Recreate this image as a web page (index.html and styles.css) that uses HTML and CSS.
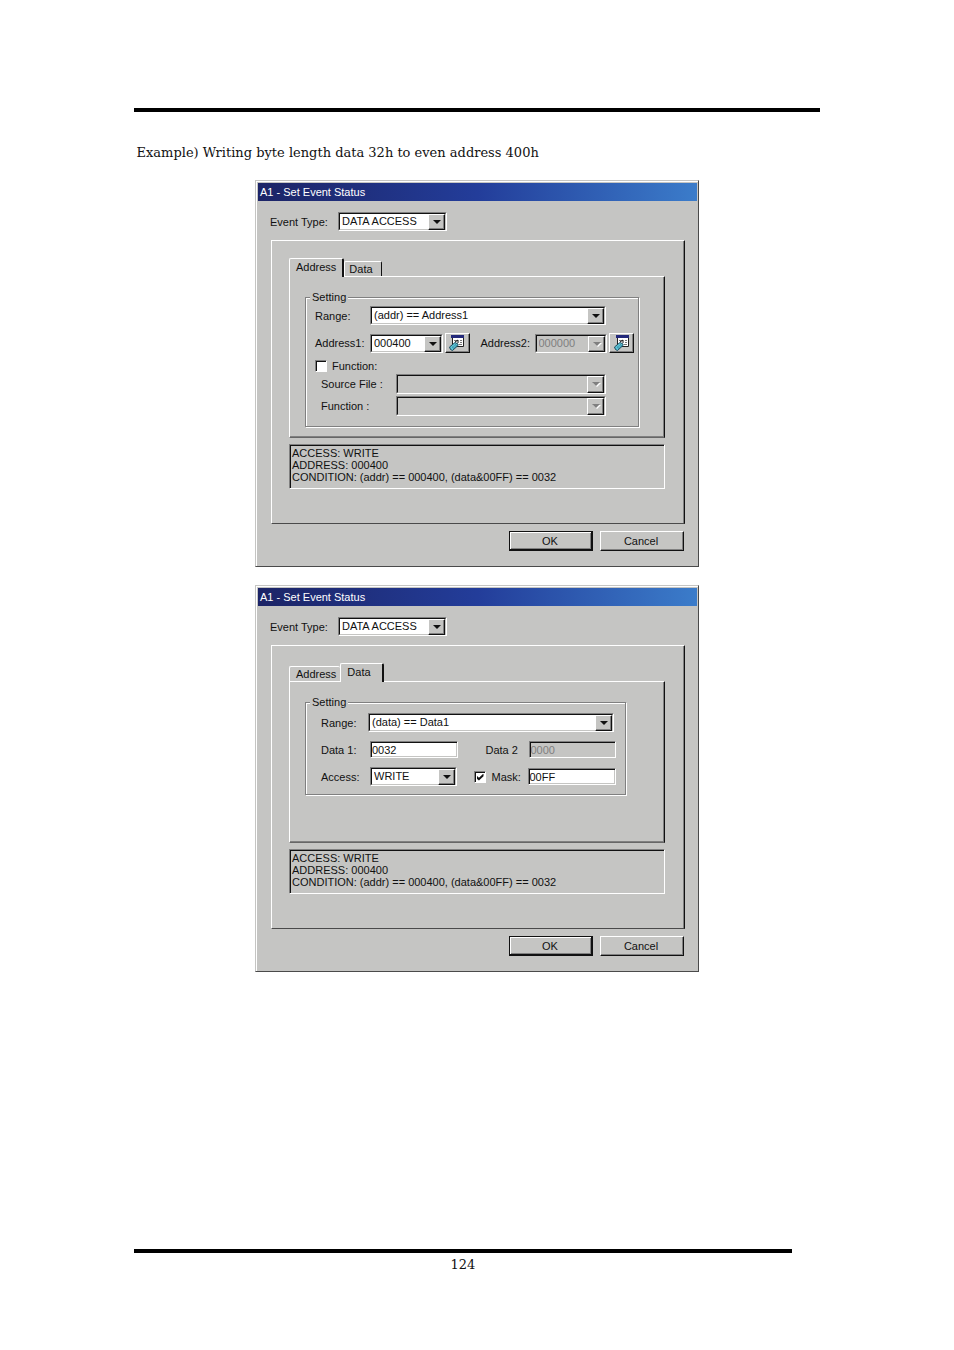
FILE: index.html
```
<!DOCTYPE html>
<html lang="en">
<head>
    <meta charset="utf-8">
    <meta name="viewport" content="width=device-width, initial-scale=1">
    <title>Set Event Status</title>
    <link rel="stylesheet" href="styles.css">
</head>
<body>
    <main class="content">
        <p class="example">Example) Writing byte length data 32h to even address 400h</p>

        <!-- Address tab -->
        <form class="dialog">
            <h2 class="title-bar">A1 - Set Event Status</h2>
            <div class="type-row">
                <label for="type-1">Event Type:</label>
                <span class="combo"><select id="type-1"><option>DATA ACCESS</option></select></span>
            </div>

            <div class="panel">
                <div class="tabs" role="tablist">
                    <button type="button" class="tab active" role="tab" aria-selected="true">Address</button>
                    <button type="button" class="tab" role="tab" aria-selected="false">Data</button>
                </div>
                <div class="tab-panel" role="tabpanel">
                    <fieldset class="setting">
                        <legend>Setting</legend>
                        <div class="row range">
                            <label for="range-1">Range:</label>
                            <span class="combo"><select id="range-1"><option>(addr) == Address1</option></select></span>
                        </div>
                        <div class="row addresses">
                            <label for="address1">Address1:</label>
                            <span class="combo"><select id="address1"><option>000400</option></select></span>
                            <button type="button" class="browse" aria-label="Browse Address1">
                                <svg width="16" height="16" viewBox="0 0 16 16">
                                    <path fill="#fff" stroke="#222" d="M3.5 1.5h11v10h-11z"/>
                                    <path fill="#23297a" d="M2 0h13v3H2z"/>
                                    <path stroke="#777" d="M5 5.500h3M11 5.500h2M11 7.500h2M10 9.500h3"/>
                                    <path fill="none" stroke="#111" d="M6 7l3-2v3"/>
                                    <path fill="#5cc4d6" stroke="#1d4a5c" d="M.5 12L6 7.500l3 1.500v1.500L3.500 15.500l-2-1z"/>
                                    <path stroke="#28728c" stroke-dasharray="1 1" d="M3 12.500l4-3M4 13.500l4-3"/>
                                </svg>
                            </button>
                            <label for="address2" class="second">Address2:</label>
                            <span class="combo"><select id="address2" disabled><option>000000</option></select></span>
                            <button type="button" class="browse" aria-label="Browse Address2">
                                <svg width="16" height="16" viewBox="0 0 16 16">
                                    <path fill="#fff" stroke="#222" d="M3.5 1.5h11v10h-11z"/>
                                    <path fill="#23297a" d="M2 0h13v3H2z"/>
                                    <path stroke="#777" d="M5 5.500h3M11 5.500h2M11 7.500h2M10 9.500h3"/>
                                    <path fill="none" stroke="#111" d="M6 7l3-2v3"/>
                                    <path fill="#5cc4d6" stroke="#1d4a5c" d="M.5 12L6 7.500l3 1.500v1.500L3.500 15.500l-2-1z"/>
                                    <path stroke="#28728c" stroke-dasharray="1 1" d="M3 12.500l4-3M4 13.500l4-3"/>
                                </svg>
                            </button>
                        </div>
                        <div class="row check">
                            <input type="checkbox" id="use-function">
                            <label for="use-function">Function:</label>
                        </div>
                        <div class="row source">
                            <label for="source-file">Source File :</label>
                            <span class="combo"><select id="source-file" disabled></select></span>
                        </div>
                        <div class="row source">
                            <label for="function-name">Function :</label>
                            <span class="combo"><select id="function-name" disabled></select></span>
                        </div>
                    </fieldset>
                </div>
                <div class="summary">
                    <div>ACCESS: WRITE</div>
                    <div>ADDRESS: 000400</div>
                    <div>CONDITION: (addr) == 000400, (data&amp;00FF) == 0032</div>
                </div>
            </div>

            <div class="actions">
                <button type="button" class="btn default">OK</button>
                <button type="button" class="btn">Cancel</button>
            </div>
        </form>

        <!-- Data tab -->
        <form class="dialog">
            <h2 class="title-bar">A1 - Set Event Status</h2>
            <div class="type-row">
                <label for="type-2">Event Type:</label>
                <span class="combo"><select id="type-2"><option>DATA ACCESS</option></select></span>
            </div>

            <div class="panel">
                <div class="tabs" role="tablist">
                    <button type="button" class="tab" role="tab" aria-selected="false">Address</button>
                    <button type="button" class="tab active" role="tab" aria-selected="true">Data</button>
                </div>
                <div class="tab-panel" role="tabpanel">
                    <fieldset class="setting data-setting">
                        <legend>Setting</legend>
                        <div class="row range">
                            <label for="range-2">Range:</label>
                            <span class="combo"><select id="range-2"><option>(data) == Data1</option></select></span>
                        </div>
                        <div class="row values">
                            <label for="data1">Data 1:</label>
                            <input type="text" id="data1" value="0032">
                            <label for="data2" class="second">Data 2</label>
                            <input type="text" id="data2" value="0000" disabled>
                        </div>
                        <div class="row values">
                            <label for="access">Access:</label>
                            <span class="combo"><select id="access"><option>WRITE</option></select></span>
                            <span class="second mask">
                                <input type="checkbox" id="use-mask" checked>
                                <label for="use-mask">Mask:</label>
                            </span>
                            <input type="text" value="00FF" aria-label="Mask value">
                        </div>
                    </fieldset>
                </div>
                <div class="summary">
                    <div>ACCESS: WRITE</div>
                    <div>ADDRESS: 000400</div>
                    <div>CONDITION: (addr) == 000400, (data&amp;00FF) == 0032</div>
                </div>
            </div>

            <div class="actions">
                <button type="button" class="btn default">OK</button>
                <button type="button" class="btn">Cancel</button>
            </div>
        </form>
    </main>

    <footer class="page-footer">124</footer>
</body>
</html>
```
FILE: styles.css
```
* {
    box-sizing: border-box;
}

body {
    display: flex;
    flex-direction: column;
    min-height: 100vh;
    margin: 0;
    padding: 108px 14% 76px;
    background: #fff;
    color: #111;
    font-family: "DejaVu Serif", "Century Schoolbook", serif;
}

.content {
    border-top: 4px solid #000;
}

.example {
    margin: 31px 3px 17px;
    font-size: 13px;
    line-height: 20px;
}

.page-footer {
    margin-top: auto;
    margin-right: 28px;
    border-top: 4px solid #000;
    padding-top: 2px;
    font-size: 13px;
    line-height: 19px;
    text-align: center;
}

/* Dialog */
.dialog {
    max-width: 444px;
    margin: 0 auto 18px;
    padding: 2px 1px 15px 2px;
    border: 1px solid;
    border-color: #c5c5c3 #4a4a4a #4a4a4a #c5c5c3;
    box-shadow: inset 1px 1px #fff;
    background: #c5c5c3;
    font-family: "Liberation Sans", Arial, sans-serif;
    font-size: 11px;
    line-height: 12px;
}

.title-bar {
    margin: 0;
    padding: 0 2px;
    background: linear-gradient(to right, #1c2466, #233d9a 50%, #3b7cca);
    color: #fff;
    font-size: 11px;
    font-weight: normal;
    line-height: 18px;
}

.type-row {
    display: flex;
    align-items: center;
    margin: 11px 12px 9px;
}

.type-row label {
    width: 68px;
}

.type-row .combo {
    flex: 0 1 109px;
}

.panel {
    margin: 0 12px 0 13px;
    padding: 17px 19px 34px 17px;
    border: 1px solid;
    border-color: #fff #111 #4a4a4a #fff;
    box-shadow: inset -1px 0 #808080;
}

/* Tabs */
.tabs {
    display: flex;
    align-items: flex-end;
    height: 18px;
}

.tab {
    height: 15px;
    padding: 0 8px 0 4px;
    border: 1px solid;
    border-color: #fff #111 transparent #fff;
    border-bottom: 0;
    border-radius: 2px 2px 0 0;
    background: #c5c5c3;
    color: #111;
    font: inherit;
}

.tab.active {
    position: relative;
    height: 19px;
    margin-bottom: -1px;
    padding: 0 6px 3px;
    border-right-width: 2px;
}

.tab.active:last-child {
    padding: 0 11px 3px 6px;
}

.tab:first-child:not(.active) {
    padding: 0 4px 0 6px;
    border-right: 0;
}

.tab-panel {
    min-height: 162px;
    padding: 14px 25px 8px 15px;
    border: 1px solid;
    border-color: #fff #111 #666 #fff;
    box-shadow: inset -1px -1px #808080;
}

/* Fields */
.setting {
    min-width: 0;
    margin: 0;
    padding: 3px 4px 8px;
    border: 1px solid #808080;
    box-shadow: 1px 1px #fff, inset 1px 1px #fff;
}

.setting legend {
    padding: 0 2px;
    background: #c5c5c3;
}

.row {
    display: flex;
    align-items: center;
    padding-left: 5px;
}

.row label {
    flex: none;
    width: 55px;
    white-space: nowrap;
}

.row .combo,
.row input[type="text"] {
    flex: 1;
}

.range {
    padding-right: 28px;
}

.addresses {
    margin-top: 8px;
}

.addresses .second {
    width: 54px;
    margin-left: 11px;
}

.check {
    gap: 5px;
    margin-top: 7px;
    margin-bottom: 2px;
}

.source {
    margin-bottom: 2px;
}

.setting .source {
    padding: 0 28px 0 11px;
}

.source label {
    width: 75px;
}

.source .combo {
    height: 20px;
}

.data-setting {
    margin-right: 13px;
    padding-top: 5px;
}

.data-setting .row {
    padding-left: 11px;
}

.data-setting .range {
    padding-right: 7px;
}

.data-setting label {
    width: 49px;
}

.data-setting .range label {
    width: 47px;
}

.values {
    margin-top: 9px;
    padding-right: 5px;
}

.values .second {
    width: 43px;
    margin-left: 28px;
}

.values .mask {
    display: flex;
    align-items: center;
    gap: 6px;
    width: 54px;
    margin-left: 17px;
}

.values .mask label {
    width: auto;
}

.combo {
    position: relative;
    min-width: 0;
    height: 19px;
    border: 1px solid;
    border-color: #808080 #fff #fff #808080;
}

.combo select {
    display: block;
    appearance: none;
    width: 100%;
    height: 100%;
    padding: 0 17px 1px 2px;
    border: 1px solid;
    border-color: #111 #c5c5c3 #c5c5c3 #111;
    border-radius: 0;
    background: #fff;
    color: #111;
    font: inherit;
}

.combo select:disabled {
    background: #c5c5c3;
    color: #808080;
    opacity: 1;
}

/* drop-down button drawn over the right end of the select */
.combo::before {
    content: "";
    position: absolute;
    top: 1px;
    right: 1px;
    bottom: 0;
    width: 15px;
    border: 1px solid;
    border-color: #fff #111 #111 #fff;
    box-shadow: inset -1px -1px #808080;
    background: #c5c5c3;
    pointer-events: none;
}

.combo::after {
    content: "";
    position: absolute;
    top: 7px;
    right: 5px;
    border: 4px solid transparent;
    border-top-color: #111;
    border-bottom: 0;
    pointer-events: none;
}

.combo:has(select:disabled)::after {
    border-top-color: #808080;
    filter: drop-shadow(1px 1px 0 #fff);
}

input[type="text"] {
    min-width: 0;
    height: 17px;
    padding: 0 1px;
    border: 1px solid;
    border-color: #808080 #fff #fff #808080;
    border-radius: 0;
    box-shadow: inset 1px 1px #111, inset -1px -1px #c5c5c3;
    background: #fff;
    color: #111;
    font: inherit;
}

input[type="text"]:disabled {
    background: #c5c5c3;
    color: #808080;
}

input[type="checkbox"] {
    flex: none;
    appearance: none;
    width: 12px;
    height: 12px;
    margin: 0;
    border: 1px solid;
    border-color: #808080 #fff #fff #808080;
    box-shadow: inset 1px 1px #111;
    background: #fff;
}

input[type="checkbox"]:checked::before {
    content: "";
    display: block;
    width: 7px;
    height: 7px;
    margin: 2px;
    background: #111;
    clip-path: polygon(0 30%, 35% 60%, 100% 0, 100% 40%, 35% 100%, 0 70%);
}

.browse {
    display: flex;
    align-items: center;
    justify-content: center;
    flex: none;
    width: 25px;
    height: 20px;
    margin-left: 2px;
    padding: 0;
    border: 1px solid;
    border-color: #fff #111 #111 #fff;
    box-shadow: inset -1px -1px #808080;
    background: #c5c5c3;
}

.summary {
    height: 45px;
    margin-top: 6px;
    padding: 2px;
    border: 1px solid;
    border-color: #808080 #fff #fff #808080;
    box-shadow: inset 1px 1px #111;
}

.actions {
    display: flex;
    justify-content: flex-end;
    gap: 7px;
    margin: 7px 13px 0;
}

.btn {
    width: 84px;
    height: 20px;
    padding: 0 2px 1px 0;
    border: 1px solid;
    border-color: #fff #111 #111 #fff;
    box-shadow: inset -1px -1px #808080;
    background: #c5c5c3;
    color: #111;
    font: inherit;
}

.btn.default {
    border-color: #111;
    box-shadow: inset -1px -1px #111, inset 1px 1px #fff, inset -2px -2px #808080;
}
```
